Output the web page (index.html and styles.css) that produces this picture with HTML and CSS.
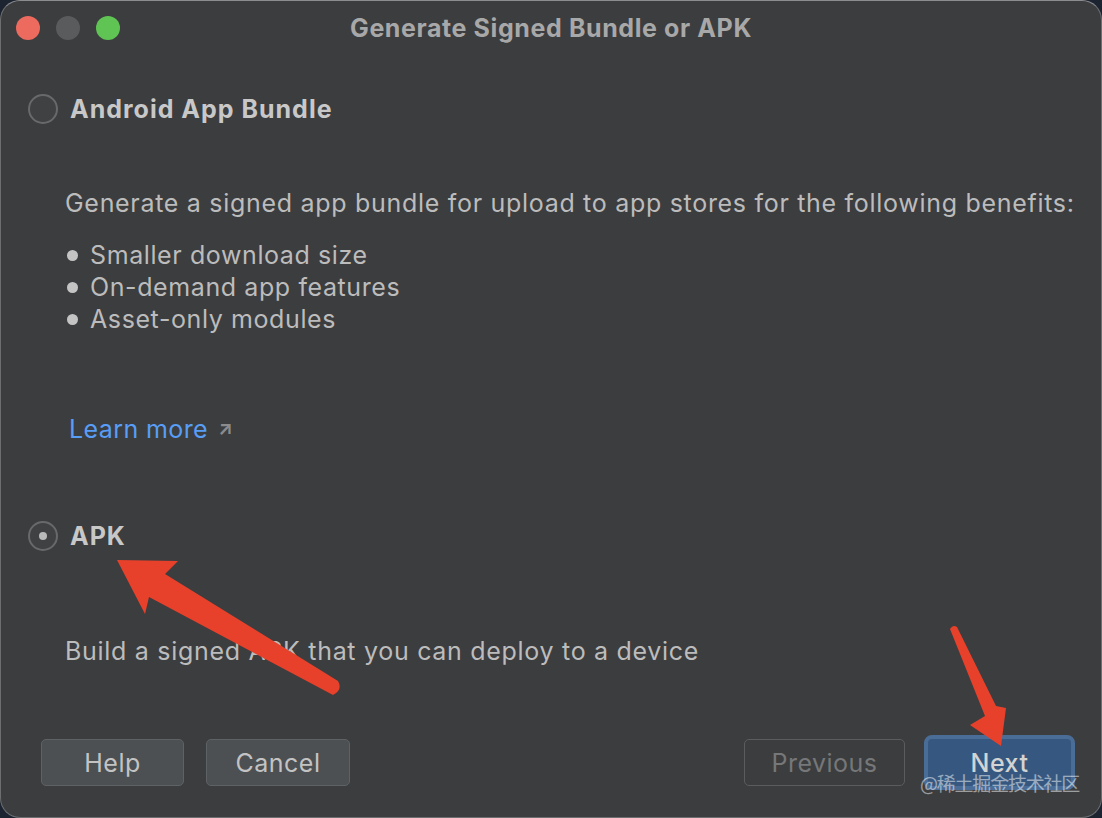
FILE: index.html
```html
<!DOCTYPE html>
<html>
<head>
<meta charset="utf-8">
<link rel="stylesheet" href="styles.css">
</head>
<body>
<div class="window">
  <div class="titlebar">
    <div class="lights">
      <span class="light red"></span>
      <span class="light gray"></span>
      <span class="light green"></span>
    </div>
    <div class="title">Generate Signed Bundle or APK</div>
    <div></div>
  </div>
  <div class="content">
    <div class="option">
      <span class="radio"></span>
      <span class="option-label">Android App Bundle</span>
    </div>
    <p class="desc first-desc">Generate a signed app bundle for upload to app stores for the following benefits:</p>
    <ul class="bullets">
      <li>Smaller download size</li>
      <li>On-demand app features</li>
      <li>Asset-only modules</li>
    </ul>
    <div class="learn"><span class="link">Learn more</span><span class="ext">&#x2197;</span></div>
    <div class="option apk">
      <span class="radio checked"></span>
      <span class="option-label">APK</span>
    </div>
    <p class="desc apk-desc">Build a signed APK that you can deploy to a device</p>
  </div>
  <div class="footer">
    <div class="group">
      <button class="btn help">Help</button>
      <button class="btn cancel">Cancel</button>
    </div>
    <div class="group right">
      <button class="btn prev">Previous</button>
      <button class="btn next">Next</button>
    </div>
  </div>
  <div class="watermark">@稀土掘金技术社区</div>
  <svg class="arrows" width="1102" height="818" viewBox="0 0 1102 818">
    <path d="M117 560 L178 561 L165 574 L338 681 Q343 690 333 695 L149 597 L145 614 Z" fill="#e8412b"/>
    <path d="M950 629 Q953 624 957 627 L996 706 L1006 708 L1001 746 L970 725 L985 716 Z" fill="#e8412b"/>
  </svg>
</div>
</body>
</html>
```
FILE: styles.css
```css
html, body {
  margin: 0;
  padding: 0;
}
body {
  background: #1c2431;
  width: 1102px;
  height: 818px;
  overflow: hidden;
}
.window {
  position: relative;
  box-sizing: border-box;
  width: 1102px;
  height: 818px;
  background: #3c3d3f;
  border: 1px solid #6d6e70;
  border-top-color: #8c8d8f;
  border-radius: 20px;
  display: flex;
  flex-direction: column;
  font-family: Inter, "Noto Sans", sans-serif;
  color: #bdbdbd;
  overflow: hidden;
}
.titlebar {
  height: 54px;
  display: grid;
  grid-template-columns: 1fr auto 1fr;
  align-items: center;
}
.lights {
  display: flex;
  gap: 16px;
  padding-left: 15px;
}
.light {
  width: 24px;
  height: 24px;
  border-radius: 50%;
}
.red { background: #ec6a5e; }
.gray { background: #5a5b5d; }
.green { background: #5fc453; }
.title {
  font-weight: 700;
  font-size: 25px;
  color: #a8a8a8;
  letter-spacing: 0.6px;
}
.content {
  flex: 1;
  padding-left: 27px;
}
.option {
  display: flex;
  align-items: center;
  gap: 12px;
  margin-top: 38px;
  height: 32px;
}
.radio {
  box-sizing: border-box;
  width: 30px;
  height: 30px;
  border-radius: 50%;
  border: 2px solid #68696b;
  background: #3f4143;
  display: flex;
  align-items: center;
  justify-content: center;
}
.radio.checked::after {
  content: "";
  width: 8px;
  height: 8px;
  border-radius: 50%;
  background: #b9b9b9;
}
.option-label {
  font-weight: 700;
  font-size: 25px;
  letter-spacing: 1px;
  color: #c8c8c8;
}
.desc {
  margin: 0;
  font-size: 25px;
  letter-spacing: 0.7px;
  line-height: 32px;
  padding-left: 37px;
  color: #bcbcbc;
}
.first-desc {
  margin-top: 62px;
}
.bullets {
  list-style: none;
  margin: 20px 0 0 0;
  padding: 0 0 0 39px;
  font-size: 25px;
  letter-spacing: 0.6px;
  line-height: 32px;
  color: #bcbcbc;
}
.bullets li {
  display: flex;
  align-items: center;
}
.bullets li::before {
  content: "";
  width: 11px;
  height: 11px;
  border-radius: 50%;
  background: #c4c4c4;
  margin-right: 12px;
}
.learn {
  margin-top: 78px;
  padding-left: 41px;
  display: flex;
  align-items: center;
  gap: 10px;
  font-size: 25px;
  letter-spacing: 0.4px;
  line-height: 32px;
}
.link {
  color: #589df6;
}
.ext {
  color: #8a8b8d;
  font-size: 19px;
  font-weight: 700;
}
.option.apk {
  margin-top: 75px;
}
.apk-desc {
  margin-top: 83px;
}
.footer {
  display: flex;
  justify-content: space-between;
  padding: 0 26px 31px 40px;
}
.group {
  display: flex;
  gap: 22px;
}
.group.right {
  gap: 19px;
}
.btn {
  font-family: Inter, "Noto Sans", sans-serif;
  font-size: 25px;
  letter-spacing: 0.5px;
  box-sizing: border-box;
  height: 47px;
  border-radius: 5px;
  border: 1px solid #5f6264;
  background: #4c5052;
  color: #c3c3c3;
  padding: 0;
}
.help { width: 143px; }
.cancel { width: 144px; }
.prev {
  width: 161px;
  background: transparent;
  color: #767778;
  border-color: #5b5c5e;
}
.next {
  width: 151px;
  height: 55px;
  margin-top: -4px;
  margin-bottom: -4px;
  background: #365880;
  border: 4px solid #4a6d97;
  border-radius: 8px;
  color: #d3d3d3;
  font-weight: 500;
}
.watermark {
  position: absolute;
  left: 919px;
  top: 768px;
  font-family: "Noto Sans CJK SC", sans-serif;
  font-size: 19px;
  color: rgba(255, 255, 255, 0.5);
  letter-spacing: -1.2px;
}
.arrows {
  position: absolute;
  left: -1px;
  top: -1px;
  pointer-events: none;
}
```
